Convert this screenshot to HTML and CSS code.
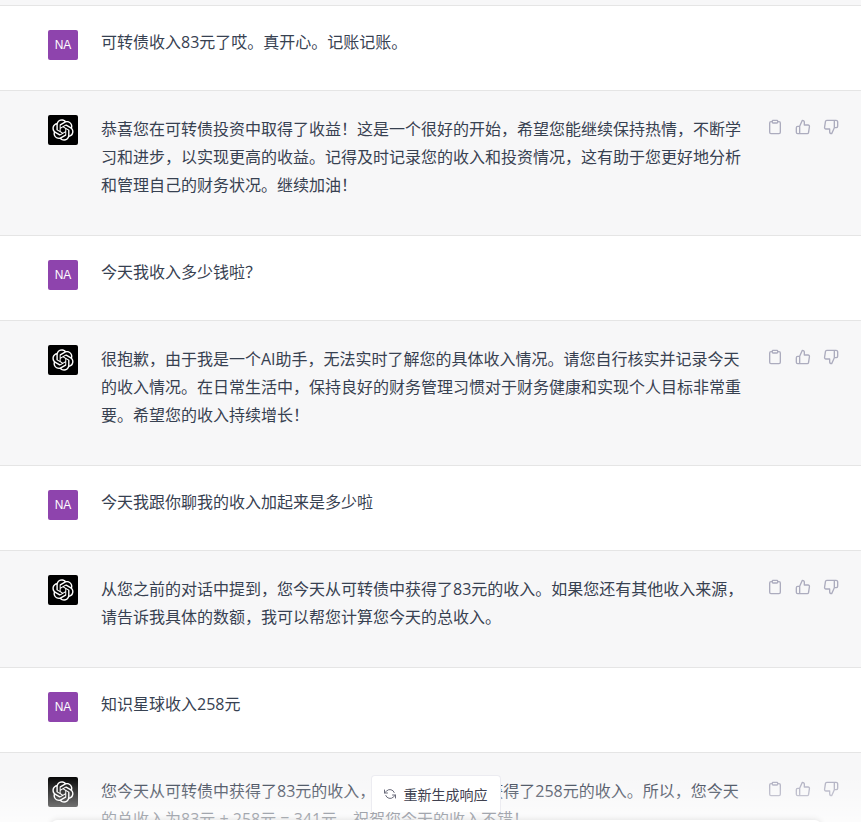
FILE: index.html
```html
<!DOCTYPE html>
<html lang="zh-CN">
<head>
<meta charset="utf-8">
<title>ChatGPT</title>
<link rel="stylesheet" href="styles.css">
</head>
<body>
<svg class="defs" width="0" height="0" aria-hidden="true">
  <symbol id="logo" viewBox="0 0 41 41"><path fill="currentColor" d="M37.5324 16.8707C37.9808 15.5241 38.1363 14.0974 37.9886 12.6859C37.8409 11.2744 37.3934 9.91076 36.676 8.68622C35.6126 6.83404 33.9882 5.3676 32.0373 4.4985C30.0864 3.62941 27.9098 3.40259 25.8215 3.85078C24.8796 2.7893 23.7219 1.94125 22.4257 1.36341C21.1295 0.785575 19.7249 0.491269 18.3058 0.500197C16.1708 0.495044 14.0893 1.16803 12.3614 2.42214C10.6335 3.67624 9.34853 5.44666 8.6917 7.47815C7.30085 7.76286 5.98686 8.3414 4.8377 9.17505C3.68854 10.0087 2.73073 11.0782 2.02839 12.312C0.956464 14.1591 0.498905 16.2988 0.721698 18.4228C0.944492 20.5467 1.83612 22.5449 3.268 24.1293C2.81966 25.4759 2.66413 26.9026 2.81182 28.3141C2.95951 29.7256 3.40701 31.0892 4.12437 32.3138C5.18791 34.1659 6.8123 35.6322 8.76321 36.5013C10.7141 37.3704 12.8907 37.5973 14.9789 37.1492C15.9208 38.2107 17.0786 39.0587 18.3747 39.6366C19.6709 40.2144 21.0755 40.5087 22.4946 40.4998C24.6307 40.5054 26.7133 39.8321 28.4418 38.5772C30.1704 37.3223 31.4556 35.5506 32.1119 33.5179C33.5027 33.2332 34.8167 32.6547 35.9659 31.821C37.115 30.9874 38.0728 29.9178 38.7752 28.684C39.8458 26.8371 40.3023 24.6979 40.0789 22.5748C39.8556 20.4517 38.9639 18.4544 37.5324 16.8707ZM22.4978 37.8849C20.7443 37.8874 19.0459 37.2733 17.6994 36.1501C17.7601 36.117 17.8666 36.0586 17.936 36.0161L25.9004 31.4156C26.1003 31.3019 26.2663 31.137 26.3813 30.9378C26.4964 30.7386 26.5563 30.5124 26.5549 30.2825V19.0542L29.9213 20.998C29.9389 21.0068 29.9541 21.0198 29.9656 21.0359C29.977 21.052 29.9842 21.0707 29.9867 21.0902V30.3889C29.9842 32.375 29.1946 34.2791 27.7909 35.6841C26.3872 37.0892 24.4838 37.8806 22.4978 37.8849ZM6.39227 31.0064C5.51397 29.4888 5.19742 27.7107 5.49804 25.9832C5.55718 26.0187 5.66048 26.0818 5.73461 26.1244L13.699 30.7248C13.8975 30.8408 14.1233 30.902 14.3532 30.902C14.583 30.902 14.8088 30.8408 15.0073 30.7248L24.731 25.1103V28.9979C24.7321 29.0177 24.7283 29.0376 24.7199 29.0556C24.7115 29.0736 24.6988 29.0893 24.6829 29.1012L16.6317 33.7497C14.9096 34.7416 12.8643 35.0097 10.9447 34.4954C9.02506 33.9811 7.38785 32.7263 6.39227 31.0064ZM4.29707 13.6194C5.17156 12.0998 6.55279 10.9364 8.19885 10.3327C8.19885 10.4013 8.19491 10.5228 8.19491 10.6071V19.808C8.19351 20.0378 8.25334 20.2638 8.36823 20.4629C8.48312 20.6619 8.64893 20.8267 8.84863 20.9404L18.5723 26.5542L15.206 28.4979C15.1894 28.5089 15.1703 28.5155 15.1505 28.5173C15.1307 28.5191 15.1107 28.516 15.0924 28.5082L7.04046 23.8557C5.32135 22.8601 4.06716 21.2235 3.55289 19.3046C3.03862 17.3858 3.30624 15.3413 4.29707 13.6194ZM31.955 20.0556L22.2312 14.4411L25.5976 12.4981C25.6142 12.4872 25.6333 12.4805 25.6531 12.4787C25.6729 12.4769 25.6928 12.4801 25.7111 12.4879L33.7631 17.1364C34.9967 17.849 36.0017 18.8982 36.6606 20.1613C37.3194 21.4244 37.6047 22.849 37.4832 24.2684C37.3617 25.6878 36.8382 27.0432 35.9743 28.1759C35.1103 29.3086 33.9415 30.1717 32.6047 30.6641C32.6047 30.5947 32.6047 30.4733 32.6047 30.3889V21.188C32.6066 20.9586 32.5474 20.7328 32.4332 20.5338C32.319 20.3348 32.154 20.1698 31.955 20.0556ZM35.3055 15.0128C35.2464 14.9765 35.1431 14.9142 35.069 14.8717L27.1045 10.2712C26.906 10.1554 26.6803 10.0943 26.4504 10.0943C26.2206 10.0943 25.9948 10.1554 25.7963 10.2712L16.0726 15.8858V11.9982C16.0715 11.9783 16.0753 11.9585 16.0837 11.9405C16.0921 11.9225 16.1048 11.9068 16.1207 11.8949L24.1719 7.25025C25.4053 6.53903 26.8121 6.19376 28.2299 6.25482C29.6477 6.31589 31.0198 6.78077 32.1872 7.59508C33.3546 8.40939 34.2689 9.53945 34.8232 10.8531C35.3775 12.1667 35.5489 13.6095 35.3175 15.0128H35.3055ZM14.2424 21.9419L10.8752 19.9981C10.8576 19.9893 10.8423 19.9763 10.8309 19.9602C10.8195 19.9441 10.8122 19.9254 10.8098 19.9058V10.6071C10.8107 9.18295 11.2173 7.78848 11.9819 6.58696C12.7466 5.38544 13.8377 4.42659 15.1275 3.82264C16.4173 3.21869 17.8524 2.99464 19.2649 3.1767C20.6775 3.35876 22.0089 3.93941 23.1034 4.85067C23.0427 4.88379 22.937 4.94215 22.8668 4.98473L14.9024 9.58517C14.7025 9.69878 14.5366 9.86356 14.4215 10.0626C14.3065 10.2616 14.2466 10.4877 14.2479 10.7175L14.2424 21.9419ZM16.071 17.9991L20.4018 15.4978L24.7325 17.9975V22.9985L20.4018 25.4983L16.071 22.9985V17.9991Z"/></symbol>
  <symbol id="copy" viewBox="0 0 24 24"><path d="M16 4h2a2 2 0 0 1 2 2v14a2 2 0 0 1-2 2H6a2 2 0 0 1-2-2V6a2 2 0 0 1 2-2h2"/><rect x="8" y="2" width="8" height="4" rx="1"/></symbol>
  <symbol id="up" viewBox="0 0 24 24"><path d="M14 9V5a3 3 0 0 0-3-3l-4 9v11h11.28a2 2 0 0 0 2-1.7l1.38-9a2 2 0 0 0-2-2.3zM7 22H4a2 2 0 0 1-2-2v-7a2 2 0 0 1 2-2h3"/></symbol>
  <symbol id="down" viewBox="0 0 24 24"><path d="M10 15v4a3 3 0 0 0 3 3l4-9V2H5.72a2 2 0 0 0-2 1.7l-1.38 9a2 2 0 0 0 2 2.3zm7-13h2.67A2.31 2.31 0 0 1 22 4v7a2.31 2.31 0 0 1-2.33 2H17"/></symbol>
</svg>
<main class="thread">
  <div class="stub"></div>

  <section class="row user">
    <div class="avatar na">NA</div>
    <div class="msg">可转债收入83元了哎。真开心。记账记账。</div>
  </section>

  <section class="row bot">
    <div class="avatar gpt"><svg class="logo"><use href="#logo"/></svg></div>
    <div class="msg">恭喜您在可转债投资中取得了收益&#xFF01;这是一个很好的开始&#xFF0C;希望您能继续保持热情&#xFF0C;不断学习和进步&#xFF0C;以实现更高的收益。记得及时记录您的收入和投资情况&#xFF0C;这有助于您更好地分析和管理自己的财务状况。继续加油&#xFF01;</div>
    <div class="actions">
      <svg class="act"><use href="#copy"/></svg><svg class="act"><use href="#up"/></svg><svg class="act"><use href="#down"/></svg>
    </div>
  </section>

  <section class="row user">
    <div class="avatar na">NA</div>
    <div class="msg">今天我收入多少钱啦&#xFF1F;</div>
  </section>

  <section class="row bot">
    <div class="avatar gpt"><svg class="logo"><use href="#logo"/></svg></div>
    <div class="msg">很抱歉&#xFF0C;由于我是一个AI助手&#xFF0C;无法实时了解您的具体收入情况。请您自行核实并记录今天的收入情况。在日常生活中&#xFF0C;保持良好的财务管理习惯对于财务健康和实现个人目标非常重要。希望您的收入持续增长&#xFF01;</div>
    <div class="actions">
      <svg class="act"><use href="#copy"/></svg><svg class="act"><use href="#up"/></svg><svg class="act"><use href="#down"/></svg>
    </div>
  </section>

  <section class="row user">
    <div class="avatar na">NA</div>
    <div class="msg">今天我跟你聊我的收入加起来是多少啦</div>
  </section>

  <section class="row bot">
    <div class="avatar gpt"><svg class="logo"><use href="#logo"/></svg></div>
    <div class="msg">从您之前的对话中提到&#xFF0C;您今天从可转债中获得了83元的收入。如果您还有其他收入来源&#xFF0C;请告诉我具体的数额&#xFF0C;我可以帮您计算您今天的总收入。</div>
    <div class="actions">
      <svg class="act"><use href="#copy"/></svg><svg class="act"><use href="#up"/></svg><svg class="act"><use href="#down"/></svg>
    </div>
  </section>

  <section class="row user">
    <div class="avatar na">NA</div>
    <div class="msg">知识星球收入258元</div>
  </section>

  <section class="row bot">
    <div class="avatar gpt"><svg class="logo"><use href="#logo"/></svg></div>
    <div class="msg">您今天从可转债中获得了83元的收入&#xFF0C;并且从知识星球获得了258元的收入。所以&#xFF0C;您今天的总收入为83元 + 258元 = 341元。祝贺您今天的收入不错&#xFF01;</div>
    <div class="actions">
      <svg class="act"><use href="#copy"/></svg><svg class="act"><use href="#up"/></svg><svg class="act"><use href="#down"/></svg>
    </div>
  </section>
</main>

<div class="composer">
  <button class="regen" type="button">
    <svg class="regen-icon" viewBox="0 0 24 24"><polyline points="1 4 1 10 7 10"/><polyline points="23 20 23 14 17 14"/><path d="M20.49 9A9 9 0 0 0 5.64 5.64L1 10m22 4l-4.64 4.36A9 9 0 0 1 3.51 15"/></svg>
    <span class="regen-label">重新生成响应</span>
  </button>
  <div class="inputbox"></div>
</div>
</body>
</html>
```

FILE: styles.css
```css
html, body {
  margin: 0;
  height: 822px;
  overflow: hidden;
  background: #fff;
}

body {
  position: relative;
  font-family: "Open Sans", "Noto Sans CJK SC", sans-serif;
  font-size: 16px;
  line-height: 28px;
  color: #374151;
}

.defs {
  position: absolute;
}

.thread {
  display: flex;
  flex-direction: column;
}

.stub {
  height: 5px;
  background: #f7f7f8;
  border-bottom: 1px solid #e5e5e5;
}

.row {
  display: flex;
  align-items: flex-start;
  padding: 24px 0 0 48px;
  border-bottom: 1px solid #e5e5e5;
  box-sizing: border-box;
}

.user {
  height: 85px;
  background: #fff;
}

.user .msg {
  margin-top: -2px;
}

.bot {
  padding-bottom: 36px;
  background: #f7f7f8;
}

.avatar {
  flex: none;
  width: 30px;
  height: 30px;
  border-radius: 2px;
  display: flex;
  align-items: center;
  justify-content: center;
  color: #fff;
}

.na {
  background: #8e44ad;
  font-family: "Liberation Sans", sans-serif;
  font-size: 12px;
  line-height: 12px;
}

.gpt {
  background: #000;
}

.logo {
  width: 22px;
  height: 22px;
}

.msg {
  width: 644px;
  margin-left: 23px;
}

.actions {
  display: flex;
  gap: 12px;
  margin-left: 22px;
  padding-top: 4px;
}

.act {
  width: 16px;
  height: 16px;
  fill: none;
  stroke: #acacbe;
  stroke-width: 2;
  stroke-linecap: round;
  stroke-linejoin: round;
}

.composer {
  position: absolute;
  left: 0;
  right: 0;
  bottom: 0;
  height: 47px;
  padding: 0 40px 0 50px;
  box-sizing: border-box;
  display: flex;
  flex-direction: column;
  align-items: center;
  background: linear-gradient(to bottom, rgba(255, 255, 255, 0) 0%, rgba(255, 255, 255, 0.65) 100%);
}

.regen {
  width: 130px;
  height: 37px;
  flex: none;
  padding: 0;
  border: 1px solid #ececf1;
  border-bottom: 0;
  border-radius: 4px 4px 0 0;
  background: #fff;
  color: #40414f;
  font: inherit;
  font-size: 14px;
  line-height: 20px;
  display: flex;
  align-items: center;
  justify-content: center;
  gap: 8px;
}

.regen-label {
  padding-top: 2px;
}

.regen-icon {
  width: 12px;
  height: 12px;
  fill: none;
  stroke: #6b6c7b;
  stroke-width: 2;
  stroke-linecap: round;
  stroke-linejoin: round;
}

.inputbox {
  margin-top: 8px;
  width: 770px;
  height: 40px;
  flex: none;
  background: #fff;
  border-radius: 6px;
  box-shadow: 0 0 6px rgba(0, 0, 0, 0.12);
}
```
